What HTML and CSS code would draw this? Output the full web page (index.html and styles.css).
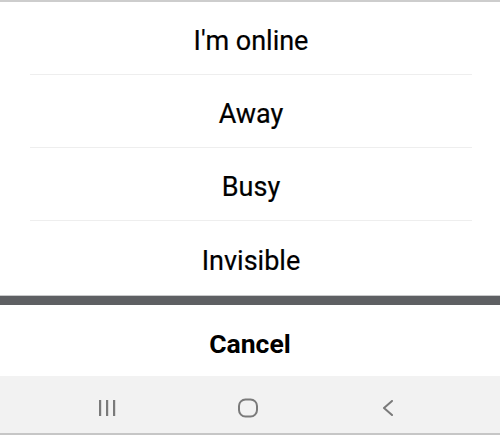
FILE: index.html
```html
<!DOCTYPE html>
<html>
<head>
<meta charset="utf-8">
<link rel="stylesheet" href="styles.css">
</head>
<body>
<div class="sheet">
  <ul class="options">
    <li class="option">I'm online</li>
    <li class="option">Away</li>
    <li class="option">Busy</li>
    <li class="option last">Invisible</li>
  </ul>
  <div class="divider"></div>
  <div class="cancel">Cancel</div>
  <nav class="navbar">
    <div class="nav-btn">
      <svg width="20" height="16" viewBox="0 0 20 16"><rect x="1" y="0" width="2.2" height="16" fill="#7a7a7a"/><rect x="8" y="0" width="2.2" height="16" fill="#7a7a7a"/><rect x="15" y="0" width="2.2" height="16" fill="#7a7a7a"/></svg>
    </div>
    <div class="nav-btn">
      <svg width="22" height="20" viewBox="0 0 22 20"><rect x="2" y="1.5" width="18" height="17" rx="6.5" ry="6.5" fill="none" stroke="#7a7a7a" stroke-width="2"/></svg>
    </div>
    <div class="nav-btn">
      <svg width="14" height="16" viewBox="0 0 14 16"><polyline points="11,1 3,8 11,15" fill="none" stroke="#7a7a7a" stroke-width="2" stroke-linejoin="round" stroke-linecap="round"/></svg>
    </div>
  </nav>
</div>
</body>
</html>
```

FILE: styles.css
```css
* { box-sizing: border-box; }
html, body { margin: 0; padding: 0; background: #fff; }
body { font-family: Roboto, "Noto Sans", sans-serif; color: #000; width: 500px; height: 435px; overflow: hidden; }
.sheet { display: flex; flex-direction: column; height: 435px; border-top: 2px solid #cdcdcd; }
.options { list-style: none; margin: 0; padding: 0; }
.option {
  height: 73px;
  margin: 0 28px 0 30px;
  border-bottom: 1px solid #eeeeee;
  display: flex; align-items: center; justify-content: center;
  padding-top: 5px;
  font-size: 27px;
  font-weight: 400;
  -webkit-text-stroke: 0.2px #000;
}
.option.last { height: 74px; border-bottom: none; }
.divider { height: 10px; background: #5e6063; border-top: 1px solid #c9cacb; }
.cancel {
  height: 71px;
  display: flex; align-items: center; justify-content: center;
  padding-top: 6px;
  font-size: 26.5px; font-weight: 700;
}
.navbar {
  flex: 1;
  background: #f2f2f2;
  border-bottom: 2px solid #c6c6c6;
  display: grid;
  grid-template-columns: repeat(3, 140px);
  justify-content: center;
  align-items: center;
  padding: 7px 4px 0 0;
}
.nav-btn { display: flex; justify-content: center; align-items: center; }
.nav-btn svg { display: block; }
```
